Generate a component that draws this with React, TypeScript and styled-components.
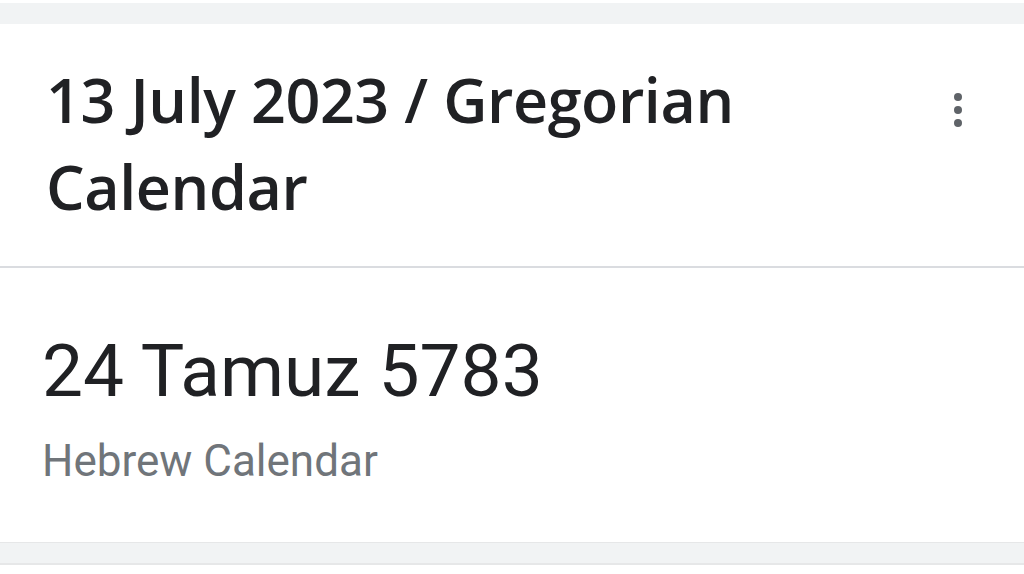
import React from "react";
import styled, { createGlobalStyle } from "styled-components";

const Global = createGlobalStyle`
  html, body { margin: 0; padding: 0; background: #ffffff; }
  body { font-family: "Roboto", "Liberation Sans", sans-serif; }
`;

const Page = styled.div`
  width: 1024px;
  height: 574px;
  overflow: hidden;
  padding-top: 3px;
  box-sizing: border-box;
  display: flex;
  flex-direction: column;
`;

const Band = styled.div<{ $h: number }>`
  height: ${(p) => p.$h}px;
  background: #f1f3f4;
  flex: none;
`;

const BottomBand = styled(Band)`
  border-top: 1px solid #e6e7e8;
  border-bottom: 2px solid #e6e7e8;
`;

const Card = styled.section`
  background: #ffffff;
  flex: none;
`;

const HeaderRow = styled.div`
  display: flex;
  align-items: flex-start;
  justify-content: space-between;
  height: 244px;
  box-sizing: border-box;
  padding: 56px 56px 0 46px;
  border-bottom: 2px solid #dadce0;
`;

const Heading = styled.h1`
  margin: 0;
  width: 860px;
  font-family: "Open Sans", sans-serif;
  font-weight: 600;
  font-size: 61px;
  line-height: 87px;
  letter-spacing: -0.4px;
  color: #202124;
  margin-top: -24px;
`;

const MenuButton = styled.button`
  border: 0;
  background: transparent;
  padding: 0;
  width: 20px;
  height: 40px;
  margin-top: 10px;
  display: flex;
  align-items: center;
  justify-content: center;
`;

const Body = styled.div`
  height: 274px;
  box-sizing: border-box;
  padding: 58px 0 0 42px;
`;

const BigDate = styled.div`
  font-family: "Roboto", sans-serif;
  font-weight: 400;
  font-size: 73px;
  line-height: 90px;
  color: #202124;
`;

const Sub = styled.div`
  font-family: "Roboto", sans-serif;
  font-size: 44px;
  line-height: 50px;
  margin-top: 20px;
  color: #70757a;
`;

export default function App() {
  return (
    <Page>
      <Global />
      <Band $h={21} />
      <Card>
        <HeaderRow>
          <Heading>13 July 2023 / Gregorian Calendar</Heading>
          <MenuButton aria-label="More options">
            <svg width="10" height="36" viewBox="0 0 10 36">
              <circle cx="5" cy="5" r="4" fill="#5f6368" />
              <circle cx="5" cy="18" r="4" fill="#5f6368" />
              <circle cx="5" cy="31" r="4" fill="#5f6368" />
            </svg>
          </MenuButton>
        </HeaderRow>
        <Body>
          <BigDate>24 Tamuz 5783</BigDate>
          <Sub>Hebrew Calendar</Sub>
        </Body>
      </Card>
      <BottomBand $h={20} />
    </Page>
  );
}
